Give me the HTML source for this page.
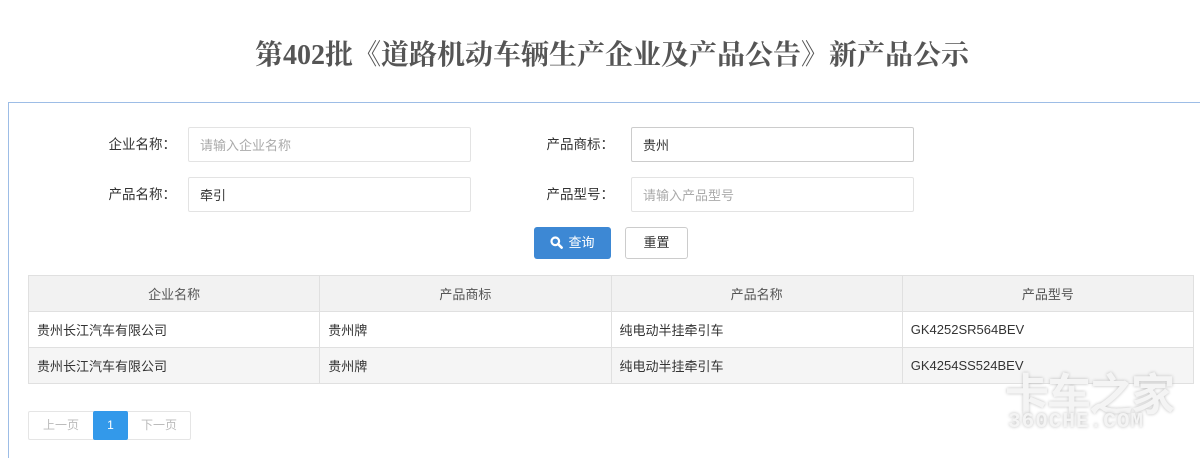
<!DOCTYPE html><html><head><meta charset="utf-8"><style>
html,body{margin:0;width:1200px;height:458px;overflow:hidden}
body{background:#fff;position:relative;font-family:"Liberation Sans","Noto Sans CJK SC",sans-serif;font-size:13px;color:#333}
.a{position:absolute}
h1{position:absolute;left:0;width:1224px;top:38px;margin:0;text-align:center;font:bold 28px "Liberation Serif","Noto Serif CJK SC",serif;color:#555;line-height:36px}
.box{left:8px;top:102px;width:1200px;height:356px;border-left:1px solid #9dbde6;border-top:1px solid #9dbde6}
.lab{width:126px;text-align:right;line-height:35px;color:#333;font-size:13.5px}
.in{border:1px solid #e3e3e3;border-radius:2px;height:34px;line-height:34px;padding-left:11px;box-sizing:border-box;color:#333}
.ph{color:#aaa}
table{position:absolute;left:28px;top:275px;width:1166px;border-collapse:collapse;table-layout:fixed}
td,th{border:1px solid #e0e0e0;height:35px;padding:0 8px;font-weight:normal;text-align:left}
th{background:#f2f2f2;text-align:center;color:#555}
tr.g td{background:#f5f5f5}
</style></head><body>
<h1>第402批《道路机动车辆生产企业及产品公告》新产品公示</h1>
<div class="a box"></div>
<div class="a lab" style="left:50px;top:127px">企业名称：</div>
<div class="a in ph" style="left:188px;top:127px;width:283px;height:35px;line-height:35px">请输入企业名称</div>
<div class="a lab" style="left:488px;top:127px">产品商标：</div>
<div class="a in" style="left:631px;top:127px;width:283px;height:35px;line-height:35px;border-color:#ccc">贵州</div>
<div class="a lab" style="left:50px;top:177px">产品名称：</div>
<div class="a in" style="left:188px;top:177px;width:283px;height:35px;line-height:35px">牵引</div>
<div class="a lab" style="left:488px;top:177px">产品型号：</div>
<div class="a in ph" style="left:631px;top:177px;width:283px;height:35px;line-height:35px">请输入产品型号</div>
<div class="a" style="left:534px;top:227px;width:77px;height:32px;background:#3d88d4;border-radius:3px;color:#fff;line-height:32px;text-align:center">
<svg width="13" height="13" viewBox="0 0 13 13" style="vertical-align:-2px;margin-right:5px"><circle cx="5.3" cy="5.3" r="3.8" fill="none" stroke="#fff" stroke-width="2.2"/><path d="M8 8l3.6 3.6" stroke="#fff" stroke-width="2.6" stroke-linecap="round"/></svg>查询</div>
<div class="a" style="left:625px;top:227px;width:61px;height:30px;border:1px solid #ccc;border-radius:3px;line-height:30px;text-align:center">重置</div>
<table>
<tr><th>企业名称</th><th>产品商标</th><th>产品名称</th><th>产品型号</th></tr>
<tr><td>贵州长江汽车有限公司</td><td>贵州牌</td><td>纯电动半挂牵引车</td><td>GK4252SR564BEV</td></tr>
<tr class="g"><td>贵州长江汽车有限公司</td><td>贵州牌</td><td>纯电动半挂牵引车</td><td>GK4254SS524BEV</td></tr>
</table>
<div class="a" style="left:28px;top:411px;width:161px;height:27px;border:1px solid #e5e5e5;border-radius:2px;font-size:12px;color:#bbb;line-height:27px">
<span class="a" style="left:0;width:64px;text-align:center">上一页</span>
<span class="a" style="left:64px;width:35px;height:29px;top:-1px;background:#3399ea;color:#fff;text-align:center;line-height:29px;border-radius:2px">1</span>
<span class="a" style="left:99px;width:62px;text-align:center">下一页</span></div>
<div class="a" style="left:1005px;top:366px;font:bold 44px 'Noto Sans CJK SC',sans-serif;color:#f4f4f4;text-shadow:0 0 3px #bbb;letter-spacing:-2px;line-height:50px">卡车之家</div>
<div class="a" style="left:1008px;top:411px;font:bold 21px 'Liberation Mono',monospace;color:#f4f4f4;text-shadow:0 0 3px #bbb;letter-spacing:1px">360CHE.COM</div>
</body></html>
